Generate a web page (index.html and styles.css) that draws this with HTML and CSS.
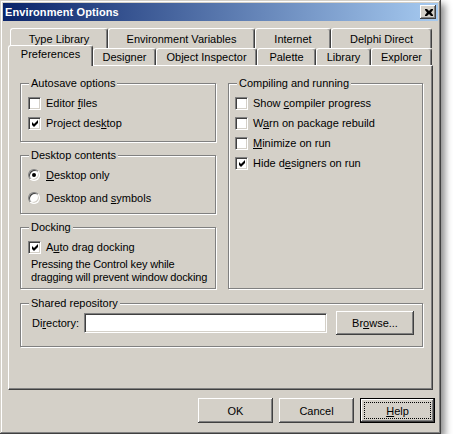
FILE: index.html
```html
<!DOCTYPE html>
<html>
<head>
<meta charset="utf-8">
<link rel="stylesheet" href="styles.css">
</head>
<body>
<div class="window">
  <div class="titlebar">
    <span class="title">Environment Options</span>
    <span class="close"><svg width="8" height="7" viewBox="0 0 8 7"><path d="M0 0h2l2 2 2-2h2v1l-2 2.5 2 2.5v1h-2l-2-2-2 2h-2v-1l2-2.5-2-2.5z" fill="#000"/></svg></span>
  </div>
  <div class="tabs">
    <div class="tabrow back">
      <div class="tab w98">Type Library</div>
      <div class="tab w147">Environment Variables</div>
      <div class="tab w76">Internet</div>
      <div class="tab w101">Delphi Direct</div>
    </div>
    <div class="tabrow front">
      <div class="tab sel w85">Preferences</div>
      <div class="tab w63">Designer</div>
      <div class="tab w101">Object Inspector</div>
      <div class="tab w59">Palette</div>
      <div class="tab w55">Library</div>
      <div class="tab w61">Explorer</div>
    </div>
  </div>
  <div class="panel">
    <div class="cols">
      <div class="leftcol">
        <div class="group g-autosave">
          <span class="legend">Autosave options</span>
          <div class="row"><span class="cb"></span><span class="lbl">Editor <u>f</u>iles</span></div>
          <div class="row"><span class="cb on"><svg width="9" height="9" viewBox="0 0 9 9"><path d="M1 3l2 2 4-4v3l-4 4-2-2z" fill="#000"/></svg></span><span class="lbl">Project des<u>k</u>top</span></div>
        </div>
        <div class="group g-desktop">
          <span class="legend">Desktop contents</span>
          <div class="row rrow"><span class="rb on"></span><span class="lbl"><u>D</u>esktop only</span></div>
          <div class="row rrow"><span class="rb"></span><span class="lbl">Desktop and <u>s</u>ymbols</span></div>
        </div>
        <div class="group g-docking">
          <span class="legend">Docking</span>
          <div class="row"><span class="cb on"><svg width="9" height="9" viewBox="0 0 9 9"><path d="M1 3l2 2 4-4v3l-4 4-2-2z" fill="#000"/></svg></span><span class="lbl">A<u>u</u>to drag docking</span></div>
          <p class="note">Pressing the Control key while<br>dragging will prevent window docking</p>
        </div>
      </div>
      <div class="group g-compile">
        <span class="legend">Compiling and running</span>
        <div class="row"><span class="cb"></span><span class="lbl">Show <u>c</u>ompiler progress</span></div>
        <div class="row"><span class="cb"></span><span class="lbl">W<u>a</u>rn on package rebuild</span></div>
        <div class="row"><span class="cb"></span><span class="lbl"><u>M</u>inimize on run</span></div>
        <div class="row"><span class="cb on"><svg width="9" height="9" viewBox="0 0 9 9"><path d="M1 3l2 2 4-4v3l-4 4-2-2z" fill="#000"/></svg></span><span class="lbl">Hide d<u>e</u>signers on run</span></div>
      </div>
    </div>
    <div class="group g-shared">
      <span class="legend">Shared repository</span>
      <div class="dirrow">
        <span class="dirlabel">Di<u>r</u>ectory:</span>
        <span class="input"></span>
        <span class="btn browse"><span class="lbl">Br<u>o</u>wse...</span></span>
      </div>
    </div>
  </div>
  <div class="buttons">
    <span class="btn">OK</span>
    <span class="btn">Cancel</span>
    <span class="btn default"><span class="focus"><span class="lbl"><u>H</u>elp</span></span></span>
  </div>
</div>
</body>
</html>
```
FILE: styles.css
```css
html, body {
  margin: 0;
  padding: 0;
  background: #ffffff;
}
body {
  font-family: "Liberation Sans", Arial, sans-serif;
  font-size: 11px;
  color: #000;
}
u { text-decoration: underline; text-underline-offset: 1px; }
.lbl { white-space: nowrap; }

.window {
  box-sizing: border-box;
  width: 441px;
  height: 434px;
  padding: 3px;
  background: #d4d0c8;
  display: flex;
  flex-direction: column;
  box-shadow:
    inset -1px -1px 0 #404040,
    inset 1px 1px 0 #d4d0c8,
    inset -2px -2px 0 #808080,
    inset 2px 2px 0 #ffffff,
    4px 4px 7px rgba(0, 0, 0, 0.45);
}

.titlebar {
  height: 18px;
  background: linear-gradient(to right, #0a246a, #a6caf0);
  display: flex;
  align-items: center;
  justify-content: space-between;
  padding: 0 2px 0 2px;
}
.title {
  color: #fff;
  font-weight: bold;
  font-size: 11px;
  letter-spacing: 0.1px;
}
.close {
  box-sizing: border-box;
  width: 16px;
  height: 14px;
  background: #d4d0c8;
  display: flex;
  align-items: center;
  justify-content: center;
  box-shadow:
    inset -1px -1px 0 #404040,
    inset 1px 1px 0 #ffffff,
    inset -2px -2px 0 #808080;
}
.close svg { display: block; margin-left: 1px; }

.tabs {
  margin-top: 7px;
}
.tabrow {
  display: flex;
}
.tabrow.back {
  margin-left: 7px;
  height: 20px;
}
.tabrow.front {
  margin-left: 5px;
  height: 17px;
  align-items: flex-end;
}
.tab {
  box-sizing: border-box;
  background: #d4d0c8;
  border-top: 1px solid #fff;
  border-left: 1px solid #fff;
  border-right: 1px solid #404040;
  border-radius: 3px 3px 0 0;
  box-shadow: inset -1px 0 0 #808080;
  text-align: center;
  white-space: nowrap;
}
.back .tab {
  height: 20px;
  padding-top: 4px;
}
.front .tab {
  height: 17px;
  padding-top: 2px;
}
.front .tab.sel {
  height: 21px;
  margin-bottom: -1px;
  padding-top: 2px;
  z-index: 2;
}
.w98 { width: 98px; }
.w147 { width: 147px; }
.w76 { width: 76px; }
.w101 { width: 101px; }
.w85 { width: 85px; }
.w63 { width: 63px; }
.w59 { width: 59px; }
.w55 { width: 55px; }
.w61 { width: 61px; }

.panel {
  box-sizing: border-box;
  margin-left: 5px;
  width: 425px;
  height: 325px;
  border-top: 1px solid #fff;
  border-left: 1px solid #fff;
  border-right: 1px solid #404040;
  border-bottom: 1px solid #404040;
  box-shadow: inset -1px -1px 0 #808080;
  padding: 17px 0 0 11px;
}

.cols {
  display: grid;
  grid-template-columns: 196px 195px;
  column-gap: 12px;
}
.leftcol {
  display: flex;
  flex-direction: column;
  gap: 13px;
}

.group {
  position: relative;
  box-sizing: border-box;
  border: 1px solid #808080;
  box-shadow: inset 1px 1px 0 #fff, 1px 1px 0 #fff;
}
.legend {
  position: absolute;
  top: -7px;
  left: 8px;
  padding: 0 2px;
  background: #d4d0c8;
  line-height: 13px;
}
.g-autosave { height: 59px; padding: 9px 0 0 7px; }
.g-desktop { height: 59px; padding: 7px 0 0 7px; }
.g-docking { height: 62px; padding: 9px 0 0 7px; }
.g-compile { height: 206px; padding: 9px 0 0 6px; }
.g-shared {
  margin-top: 14px;
  width: 403px;
  height: 44px;
  padding: 7px 0 0 11px;
}

.row {
  height: 20px;
  display: flex;
  align-items: center;
  white-space: nowrap;
}
.rrow { height: 23px; }

.cb {
  box-sizing: border-box;
  width: 13px;
  height: 13px;
  margin-right: 5px;
  background: #fff;
  border-top: 1px solid #808080;
  border-left: 1px solid #808080;
  border-right: 1px solid #fff;
  border-bottom: 1px solid #fff;
  box-shadow: inset 1px 1px 0 #404040, inset -1px -1px 0 #d4d0c8;
  display: flex;
  align-items: center;
  justify-content: center;
  flex: none;
}
.cb svg { display: block; margin: 1px 0 0 1px; }

.rb {
  position: relative;
  box-sizing: border-box;
  width: 12px;
  height: 12px;
  margin: 0 6px 0 0;
  border-radius: 50%;
  background: #fff;
  border-top: 1px solid #808080;
  border-left: 1px solid #808080;
  border-right: 1px solid #fff;
  border-bottom: 1px solid #fff;
  box-shadow: inset 1px 1px 0 #404040, inset -1px -1px 0 #d4d0c8;
  flex: none;
}
.rb.on::after {
  content: "";
  position: absolute;
  left: 3px;
  top: 3px;
  width: 4px;
  height: 4px;
  border-radius: 50%;
  background: #000;
}

.note {
  margin: 0 0 0 3px;
  line-height: 13px;
  padding-top: 1px;
  white-space: nowrap;
  letter-spacing: -0.15px;
}

.dirrow {
  display: flex;
  align-items: center;
  height: 24px;
}
.dirlabel {
  width: 52px;
}
.input {
  box-sizing: border-box;
  width: 243px;
  height: 20px;
  background: #fff;
  border-top: 1px solid #808080;
  border-left: 1px solid #808080;
  border-right: 1px solid #fff;
  border-bottom: 1px solid #fff;
  box-shadow: inset 1px 1px 0 #404040, inset -1px -1px 0 #d4d0c8;
}

.btn {
  box-sizing: border-box;
  width: 75px;
  height: 25px;
  display: flex;
  align-items: center;
  justify-content: center;
  background: #d4d0c8;
  box-shadow:
    inset -1px -1px 0 #404040,
    inset 1px 1px 0 #ffffff,
    inset -2px -2px 0 #808080;
}
.btn.browse {
  width: 78px;
  height: 24px;
  margin-left: 9px;
}

.buttons {
  display: flex;
  justify-content: flex-end;
  gap: 6px;
  margin-top: 8px;
  padding-right: 3px;
}
.btn.default {
  border: 1px solid #000;
  padding: 3px;
}
.focus {
  box-sizing: border-box;
  width: 100%;
  height: 100%;
  border: 1px dotted #000;
  display: flex;
  align-items: center;
  justify-content: center;
}
```
